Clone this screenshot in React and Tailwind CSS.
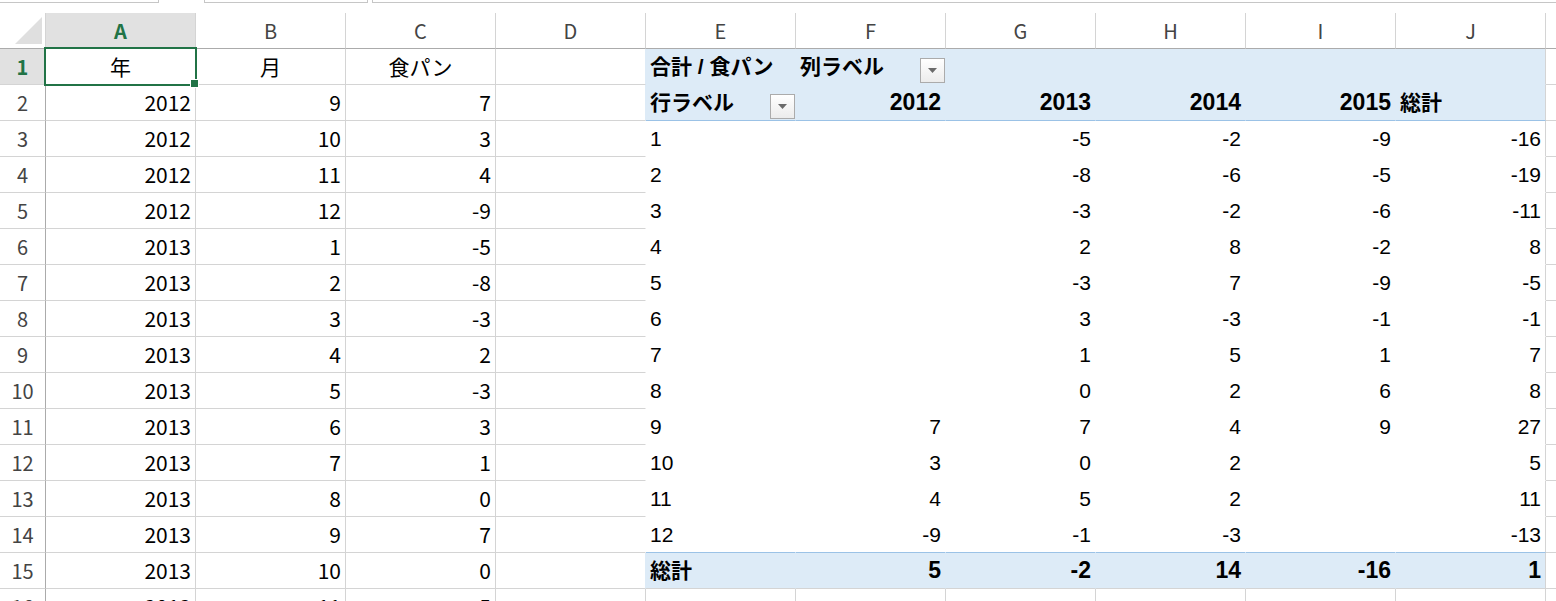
const cols = ['A', 'B', 'C', 'D', 'E', 'F', 'G', 'H', 'I', 'J'];

const sheet = [
  [2012, 9, 7],
  [2012, 10, 3],
  [2012, 11, 4],
  [2012, 12, -9],
  [2013, 1, -5],
  [2013, 2, -8],
  [2013, 3, -3],
  [2013, 4, 2],
  [2013, 5, -3],
  [2013, 6, 3],
  [2013, 7, 1],
  [2013, 8, 0],
  [2013, 9, 7],
  [2013, 10, 0],
  [2013, 11, 5],
];

// pivot body: row label, 2012, 2013, 2014, 2015, total
const pivot = [
  [1, '', -5, -2, -9, -16],
  [2, '', -8, -6, -5, -19],
  [3, '', -3, -2, -6, -11],
  [4, '', 2, 8, -2, 8],
  [5, '', -3, 7, -9, -5],
  [6, '', 3, -3, -1, -1],
  [7, '', 1, 5, 1, 7],
  [8, '', 0, 2, 6, 8],
  [9, 7, 7, 4, 9, 27],
  [10, 3, 0, 2, '', 5],
  [11, 4, 5, 2, '', 11],
  [12, -9, -1, -3, '', -13],
];

const totals = [5, -2, 14, -16, 1];

const jp = "font-['Noto_Sans_CJK_JP',sans-serif]";
const pv = "font-['Liberation_Sans','Noto_Sans_CJK_JP',sans-serif]";

function FilterButton() {
  return (
    <div className="self-end mb-[1px] w-[25px] h-[25px] shrink-0 border border-[#ababab] bg-gradient-to-b from-white to-[#ececec] flex items-center justify-center">
      <svg width="9" height="5" viewBox="0 0 9 5">
        <path d="M0 0h9L4.5 5z" fill="#6a6a6a" />
      </svg>
    </div>
  );
}

function borderFor(r, c) {
  const inPivot = r >= 1 && r <= 15;
  let b = 'border-b-[#d4d4d4]';
  let rr = 'border-r-[#d4d4d4]';
  let bg = 'bg-white';
  if (c >= 4 && inPivot) {
    if (r === 1) b = 'border-b-[#ddebf7]';
    else if (r === 2 || r === 14) b = 'border-b-[#9bc2e6]';
    else if (r === 15) b = 'border-b-[#d4d4d4]';
    else b = 'border-b-white';
    if (r === 1 || r === 2 || r === 15) bg = 'bg-[#ddebf7]';
  }
  if (c >= 3 && c <= 8 && inPivot) {
    rr = r === 1 || r === 2 || r === 15 ? 'border-r-[#ddebf7]' : 'border-r-white';
  }
  return `${b} ${rr} ${bg}`;
}

function Cell({ r, c, children, align = 'right', bold, font = jp, size = 'text-[21px]' }) {
  const just =
    align === 'right' ? 'justify-end pr-[4px]' : align === 'center' ? 'justify-center' : 'justify-start pl-[4px]';
  return (
    <div
      className={`w-[150px] h-[36px] shrink-0 border-r border-b flex items-center ${just} ${borderFor(r, c)} ${font} ${size} text-black ${bold ? 'font-bold' : ''} whitespace-nowrap overflow-hidden`}
    >
      {children}
    </div>
  );
}

function RowHead({ n }) {
  const sel = n === 1;
  return (
    <div
      className={`w-[46px] h-[36px] shrink-0 border-r border-b border-r-[#ababab] border-b-[#d4d4d4] flex items-center justify-center ${jp} text-[20px] ${sel ? 'bg-[#e1e1e1] text-[#217346] font-bold' : 'bg-white text-[#444]'}`}
    >
      {n}
    </div>
  );
}

function pivotCells(r) {
  const out = [];
  if (r === 1) {
    out.push(
      <Cell key="E" r={r} c={4} align="left" bold font={pv}>
        合計 / 食パン
      </Cell>
    );
    out.push(
      <Cell key="F" r={r} c={5} align="left" bold font={pv}>
        <span className="flex-1">列ラベル</span>
        <FilterButton />
      </Cell>
    );
    for (let c = 6; c <= 9; c++) out.push(<Cell key={c} r={r} c={c} />);
  } else if (r === 2) {
    out.push(
      <Cell key="E" r={r} c={4} align="left" bold font={pv}>
        <span className="flex-1">行ラベル</span>
        <FilterButton />
      </Cell>
    );
    ['2012', '2013', '2014', '2015'].forEach((y, i) =>
      out.push(
        <Cell key={y} r={r} c={5 + i} bold font={pv} size="text-[23px]">
          {y}
        </Cell>
      )
    );
    out.push(
      <Cell key="J" r={r} c={9} align="left" bold font={pv}>
        総計
      </Cell>
    );
  } else if (r >= 3 && r <= 14) {
    const d = pivot[r - 3];
    out.push(
      <Cell key="E" r={r} c={4} align="left" font={pv}>
        {d[0]}
      </Cell>
    );
    for (let i = 1; i <= 5; i++)
      out.push(
        <Cell key={i} r={r} c={4 + i} font={pv}>
          {d[i]}
        </Cell>
      );
  } else if (r === 15) {
    out.push(
      <Cell key="E" r={r} c={4} align="left" bold font={pv}>
        総計
      </Cell>
    );
    totals.forEach((v, i) =>
      out.push(
        <Cell key={i} r={r} c={5 + i} bold font={pv} size="text-[23px]">
          {v}
        </Cell>
      )
    );
  } else {
    for (let c = 4; c <= 9; c++) out.push(<Cell key={c} r={r} c={c} />);
  }
  return out;
}

function Row({ r }) {
  let left;
  if (r === 1) {
    left = ['年', '月', '食パン'].map((t, i) => (
      <Cell key={i} r={r} c={i} align="center">
        {t}
      </Cell>
    ));
  } else {
    left = sheet[r - 2].map((v, i) => (
      <Cell key={i} r={r} c={i}>
        {v}
      </Cell>
    ));
  }
  return (
    <div className="flex">
      <RowHead n={r} />
      {left}
      <Cell r={r} c={3} />
      {pivotCells(r)}
      <div className="flex-1 h-[36px] border-b border-[#d4d4d4]" />
    </div>
  );
}

export default function App() {
  const rows = Array.from({ length: 16 }, (_, i) => i + 1);
  return (
    <div className="relative w-[1556px] h-[601px] overflow-hidden bg-white">
      {/* formula bar remnants */}
      <div className="flex h-[13px] items-start">
        <div className="w-[159px] h-[3px] border-b border-r border-[#c6c6c6]" />
        <div className="w-[45px]" />
        <div className="w-[164px] h-[3px] border-b border-l border-r border-[#c6c6c6]" />
        <div className="w-[4px]" />
        <div className="flex-1 h-[3px] border-b border-l border-[#c6c6c6]" />
      </div>

      {/* column headers */}
      <div className="flex">
        <div className="w-[46px] h-[36px] shrink-0 border-r border-b border-r-[#d4d4d4] border-b-[#ababab] bg-white">
          <svg width="45" height="35" viewBox="0 0 45 35">
            <path d="M42 4V31H15z" fill="#dfdfdf" />
          </svg>
        </div>
        {cols.map((c, i) => (
          <div
            key={c}
            className={`w-[150px] h-[36px] shrink-0 border-r border-b border-r-[#d4d4d4] border-b-[#ababab] flex items-center justify-center ${jp} text-[20px] ${i === 0 ? 'bg-[#e1e1e1] text-[#217346] font-bold' : 'bg-white text-[#444]'}`}
          >
            {c}
          </div>
        ))}
        <div className="flex-1 h-[36px] border-b border-[#ababab]" />
      </div>

      {rows.map((r) => (
        <Row key={r} r={r} />
      ))}

      {/* active cell A1 */}
      <div className="absolute left-[44px] top-[47px] w-[153px] h-[39px] border-2 border-[#217346]" />
      <div className="absolute left-[190px] top-[79px] w-[9px] h-[9px] bg-[#217346] border border-white" />
    </div>
  );
}
